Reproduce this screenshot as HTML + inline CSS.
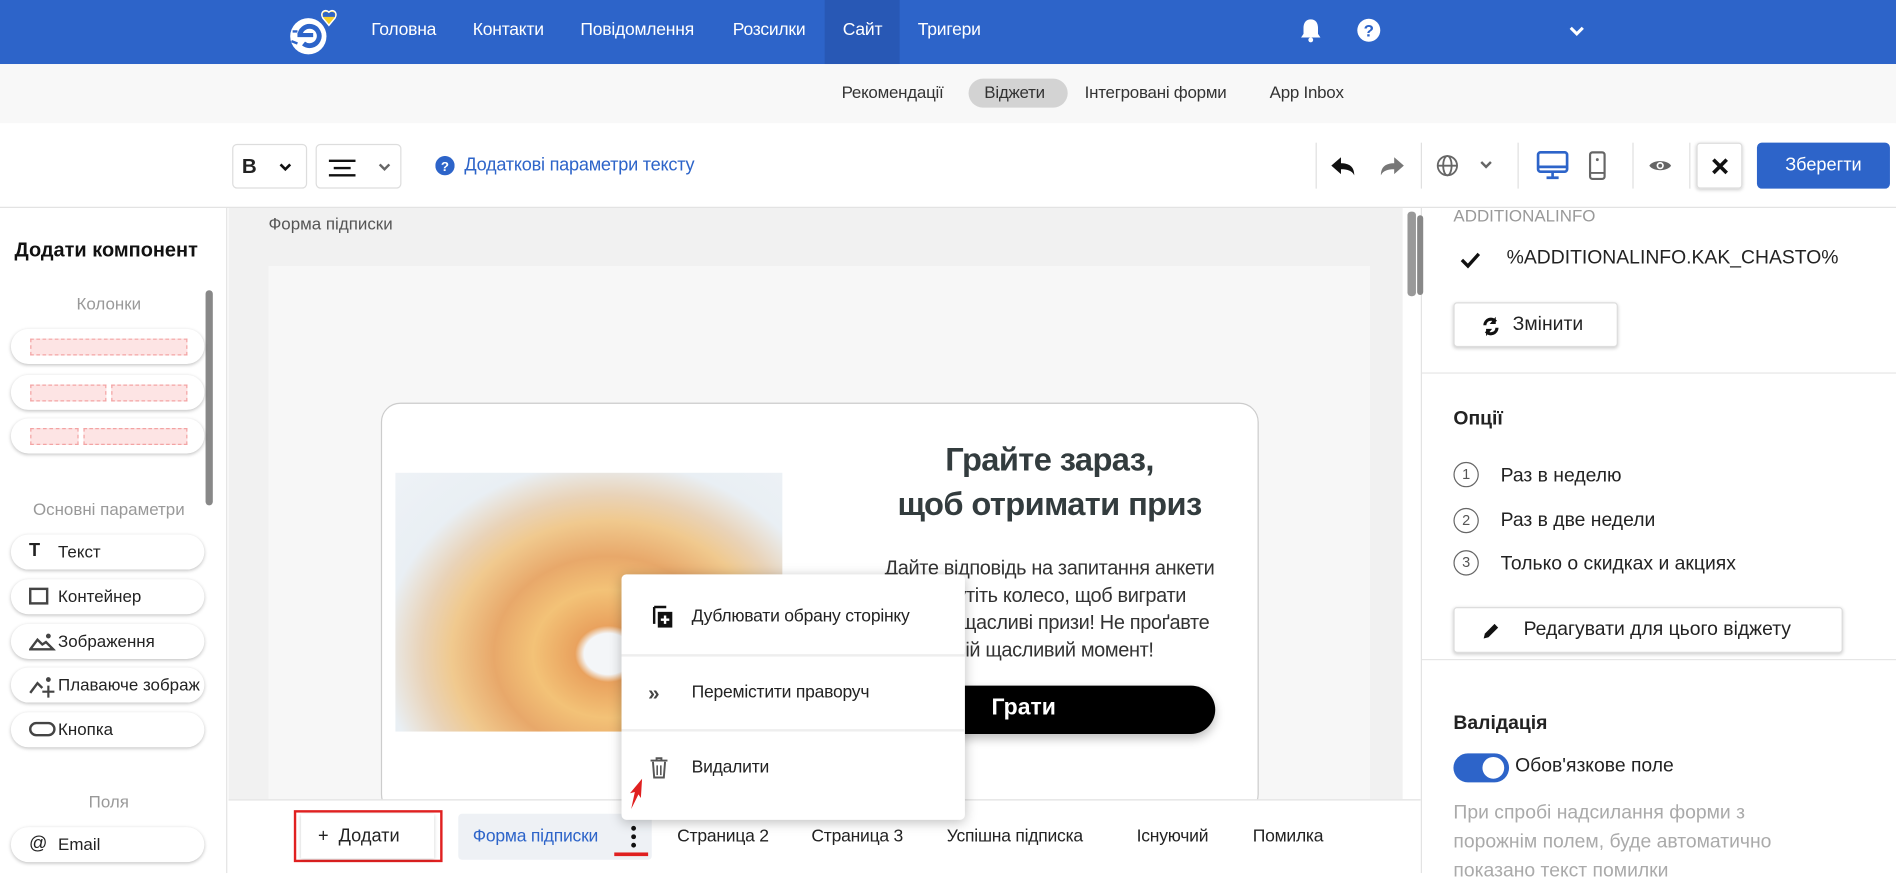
<!DOCTYPE html>
<html><head><meta charset="utf-8">
<style>
*{box-sizing:border-box;margin:0;padding:0}
html,body{width:1896px;height:873px;overflow:hidden;background:#fff}
#w{position:absolute;left:0;top:0;width:1568px;height:722px;transform:scale(1.20918);transform-origin:0 0;font-family:"Liberation Sans","Noto Sans CJK SC",sans-serif;color:#222}
.a{position:absolute}
.nav{left:0;top:0;width:1568px;height:53px;background:#2d64c9}
.nav span{position:absolute;top:17px;color:#fff;font-size:14.5px;letter-spacing:-.2px}
.sub{left:0;top:53px;width:1568px;height:49px;background:#f8f8f8}
.sub span{position:absolute;top:15px;font-size:14px;color:#333;letter-spacing:-.2px}
.tb{left:0;top:102px;width:1568px;height:70px;background:#fff;border-bottom:1px solid #e2e2e2}
.box{position:absolute;border:1px solid #ddd;border-radius:4px;background:#fff}
.sep{position:absolute;top:118px;width:1px;height:38px;background:#e0e0e0}
.left{left:0;top:172px;width:188px;height:550px;background:#fff;border-right:1px solid #e3e3e3}
.pill{position:absolute;left:9px;width:160px;height:29px;border-radius:15px;background:#fff;box-shadow:0 1px 3px rgba(0,0,0,.25);font-size:14px;color:#222}
.pill b{position:absolute;left:39px;top:6px;font-weight:normal}
.pill i{position:absolute;left:15px;top:7px;font-style:normal}
.sec{position:absolute;left:0;width:180px;text-align:center;font-size:14px;color:#999}
.dash{position:absolute;top:8px;height:14px;border:1px dashed #f3a3a3;background:#fde4e4}
.tabs span{position:absolute;top:684px;font-size:14.5px;color:#222;letter-spacing:-.2px}
.mi{position:absolute;left:572px;font-size:14.5px;color:#222;letter-spacing:-.2px}
.rp{left:1175px;top:172px;width:393px;height:550px;background:#fff;border-left:1px solid #e3e3e3}
.rp .t{position:absolute;font-size:16px;color:#222}
.btn{position:absolute;background:#fff;border:1px solid #ddd;border-radius:3px;box-shadow:0 1px 3px rgba(0,0,0,.2);font-size:16px}
.num{position:absolute;left:26px;width:21px;height:21px;border:1px solid #666;border-radius:50%;font-size:12px;text-align:center;line-height:19px;color:#555}
</style></head><body><div id="w">

<div class="a nav">
 <svg class="a" style="left:236px;top:6px" width="56" height="42" viewBox="0 0 56 42">
  <circle cx="19" cy="24" r="15" fill="#fff"/>
  <path d="M12 24 a8 8 0 1 1 3 6" stroke="#2d64c9" stroke-width="4" fill="none"/>
  <path d="M10 23 h13" stroke="#2d64c9" stroke-width="3.5"/>
  <path d="M5 28 l5 2 M6 20 l4 0" stroke="#2d64c9" stroke-width="2"/>
  <path d="M36 4 c-3-3 -8 0 -5 5 l5 6 l5-6 c3-5 -2-8 -5-5z" fill="#f6d02a" stroke="#fff" stroke-width="1.2"/>
  <path d="M31 5 c2-2 4-1 5 0 c1-1 3-2 5 0 v3 h-10z" fill="#2d64c9"/>
 </svg>
 <span style="left:307px">Головна</span>
 <span style="left:391px">Контакти</span>
 <span style="left:480px">Повідомлення</span>
 <span style="left:606px">Розсилки</span>
 <div class="a" style="left:682px;top:0;width:62px;height:53px;background:#2858b5"></div>
 <span style="left:697px">Сайт</span>
 <span style="left:759px">Тригери</span>
 <svg class="a" style="left:1074px;top:14px" width="20" height="22" viewBox="0 0 20 22"><path d="M10 2c-4 0-6 3-6 7v5l-2 3h16l-2-3V9c0-4-2-7-6-7z" fill="#fff"/><circle cx="10" cy="19" r="2" fill="#fff"/></svg>
 <svg class="a" style="left:1122px;top:15px" width="20" height="20" viewBox="0 0 20 20"><circle cx="10" cy="10" r="9.5" fill="#fff"/><text x="10" y="15" text-anchor="middle" font-size="14" font-weight="bold" fill="#2d64c9" font-family="Liberation Sans">?</text></svg>
 <svg class="a" style="left:1297px;top:21px" width="14" height="10" viewBox="0 0 14 10"><path d="M2 2l5 5 5-5" stroke="#fff" stroke-width="2.5" fill="none"/></svg>
</div>

<div class="a sub">
 <span style="left:696px">Рекомендації</span>
 <div class="a" style="left:801px;top:12px;width:82px;height:24px;border-radius:12px;background:#d3d3d3"></div>
 <span style="left:814px">Віджети</span>
 <span style="left:897px">Інтегровані форми</span>
 <span style="left:1050px">App Inbox</span>
</div>

<div class="a tb"></div>
<div class="box" style="left:192px;top:119px;width:62px;height:37px"><b style="position:absolute;left:7px;top:8px;font-size:17px">B</b><svg class="a" style="left:38px;top:15px" width="10" height="8"><path d="M1 1l4 4 4-4" stroke="#111" stroke-width="2.2" fill="none"/></svg></div>
<div class="box" style="left:261px;top:119px;width:71px;height:37px"><svg class="a" style="left:8px;top:10px" width="26" height="18"><path d="M2 3h22M6 9h14M2 15h22" stroke="#111" stroke-width="2"/></svg><svg class="a" style="left:51px;top:15px" width="10" height="8"><path d="M1 1l4 4 4-4" stroke="#666" stroke-width="2" fill="none"/></svg></div>
<svg class="a" style="left:360px;top:129px" width="16" height="16"><circle cx="8" cy="8" r="8" fill="#2d64c9"/><text x="8" y="12.5" text-anchor="middle" font-size="11" font-weight="bold" fill="#fff" font-family="Liberation Sans">?</text></svg>
<div class="a" style="left:384px;top:128px;font-size:15px;color:#2d64c9;letter-spacing:-.2px">Додаткові параметри тексту</div>
<div class="sep" style="left:1088px"></div><div class="sep" style="left:1175px"></div><div class="sep" style="left:1255px"></div><div class="sep" style="left:1350px"></div><div class="sep" style="left:1397px"></div>
<svg class="a" style="left:1100px;top:128px" width="22" height="18"><path d="M9 2L1 9l8 7v-4c5 0 9 1 11 5c0-7-4-10-11-10z" fill="#111"/></svg>
<svg class="a" style="left:1140px;top:128px" width="22" height="18"><path d="M13 2l8 7-8 7v-4c-5 0-9 1-11 5c0-7 4-10 11-10z" fill="#777"/></svg>
<svg class="a" style="left:1187px;top:127px" width="20" height="20"><g stroke="#666" stroke-width="1.5" fill="none"><circle cx="10" cy="10" r="8"/><ellipse cx="10" cy="10" rx="3.5" ry="8"/><path d="M2 10h16"/></g></svg>
<svg class="a" style="left:1224px;top:133px" width="10" height="8"><path d="M1 1l4 4 4-4" stroke="#666" stroke-width="2" fill="none"/></svg>
<svg class="a" style="left:1270px;top:124px" width="28" height="26"><rect x="2" y="2" width="24" height="16" rx="2" stroke="#2d64c9" stroke-width="2.2" fill="none"/><path d="M2 14h24M14 18v4M9 23h10" stroke="#2d64c9" stroke-width="2.2"/></svg>
<svg class="a" style="left:1313px;top:124px" width="16" height="26"><rect x="2" y="2" width="12" height="22" rx="2" stroke="#666" stroke-width="1.8" fill="none"/><circle cx="8" cy="8" r="1.2" fill="#666"/><path d="M2 19h12" stroke="#666" stroke-width="1.5"/></svg>
<svg class="a" style="left:1363px;top:130px" width="20" height="14"><path d="M1 7c3-5 15-5 18 0c-3 5-15 5-18 0z" fill="#666"/><circle cx="10" cy="7" r="3" fill="#fff"/><circle cx="10" cy="7" r="1.6" fill="#666"/></svg>
<div class="a" style="left:1403px;top:118px;width:38px;height:38px;border:1px solid #ddd;border-radius:3px;box-shadow:0 1px 3px rgba(0,0,0,.2)"><svg class="a" style="left:11px;top:11px" width="15" height="15"><path d="M2 2l11 11M13 2L2 13" stroke="#111" stroke-width="3"/></svg></div>
<div class="a" style="left:1453px;top:118px;width:110px;height:38px;background:#2d64c9;border-radius:4px;color:#fff;font-size:15px;text-align:center;line-height:38px">Зберегти</div>

<div class="a left">
 <div class="a" style="left:12px;top:26px;font-size:16.5px;font-weight:bold;color:#111">Додати компонент</div>
 <div class="a" style="left:170px;top:68px;width:6px;height:178px;border-radius:3px;background:#888"></div>
 <div class="sec" style="top:71px">Колонки</div>
 <div class="pill" style="top:100px"><div class="dash" style="left:16px;width:130px"></div></div>
 <div class="pill" style="top:138px"><div class="dash" style="left:16px;width:63px"></div><div class="dash" style="left:83px;width:63px"></div></div>
 <div class="pill" style="top:174px"><div class="dash" style="left:16px;width:40px"></div><div class="dash" style="left:60px;width:86px"></div></div>
 <div class="sec" style="top:241px">Основні параметри</div>
 <div class="pill" style="top:270px"><i style="font-weight:bold;font-size:15px;top:5px">T</i><b>Текст</b></div>
 <div class="pill" style="top:307px"><i><span style="display:block;width:16px;height:14px;border:2px solid #444"></span></i><b>Контейнер</b></div>
 <div class="pill" style="top:344px"><i><svg width="22" height="16"><path d="M1 14l6-8 4 4 3-2 6 6z" stroke="#444" stroke-width="2" fill="none"/><circle cx="16" cy="3" r="2" fill="#444"/></svg></i><b>Зображення</b></div>
 <div class="pill" style="top:380px;overflow:hidden"><i><svg width="22" height="18"><path d="M1 14l6-8 4 4" stroke="#444" stroke-width="2" fill="none"/><circle cx="16" cy="3" r="2" fill="#444"/><path d="M16 8v10M11 13h10" stroke="#444" stroke-width="1.8"/></svg></i><b style="white-space:nowrap">Плаваюче зображ</b></div>
 <div class="pill" style="top:417px"><i><span style="display:block;width:22px;height:12px;border:2px solid #444;border-radius:6px;margin-top:1px"></span></i><b>Кнопка</b></div>
 <div class="sec" style="top:483px">Поля</div>
 <div class="pill" style="top:512px"><i style="top:5px;font-size:15px">@</i><b>Email</b></div>
</div>

<div class="a" style="left:189px;top:172px;width:971px;height:489px;background:#f1f1f1"></div>
<div class="a" style="left:222px;top:177px;font-size:14px;color:#555">Форма підписки</div>
<div class="a" style="left:222px;top:220px;width:911px;height:441px;background:#f7f7f7"></div>
<div class="a" style="left:1164px;top:175px;width:7px;height:70px;border-radius:3px;background:#999"></div>
<div class="a" style="left:315px;top:333px;width:726px;height:340px;background:#fff;border:1px solid #ccc;border-radius:16px"></div>
<div class="a" style="left:327px;top:391px;width:320px;height:214px;overflow:hidden;background:radial-gradient(ellipse at 55% 70%,#f4f6f8 0 8%,#e9a25e 11%,#f3c277 25%,#e8a86a 38%,#f0c98e 52%,#e9d3b8 62%,#e9eff4 75%,#eef2f6 100%)"></div>
<div class="a" style="left:660px;top:362px;width:416px;text-align:center;font-size:27px;font-weight:bold;color:#333c3e;line-height:37px;letter-spacing:-.5px">Грайте зараз,<br>щоб отримати приз</div>
<div class="a" style="left:670px;top:459px;width:396px;text-align:center;font-size:16.5px;color:#333;line-height:22.5px;letter-spacing:-.3px">Дайте відповідь на запитання анкети<br>та крутіть колесо, щоб виграти<br>цінні та щасливі призи! Не проґавте<br>свій щасливий момент!</div>
<div class="a" style="left:710px;top:567px;width:295px;height:40px;background:#000;border-radius:20px;box-shadow:0 4px 8px rgba(0,0,0,.25);color:#fff;font-size:19px;font-weight:bold;padding:8px 0 0 110px">Грати</div>

<div class="a" style="left:189px;top:661px;width:986px;height:61px;background:#fff;border-top:1px solid #e0e0e0"></div>
<div class="a" style="left:243px;top:670px;width:123px;height:43px;border:2px solid #e02020"></div>
<div class="a" style="left:249px;top:673px;width:110px;height:37px;background:#fff;box-shadow:0 1px 3px rgba(0,0,0,.2);font-size:15px;padding:10px 0 0 14px">+&nbsp; Додати</div>
<div class="a" style="left:379px;top:673px;width:160px;height:38px;background:#eef1f5;border-radius:3px"></div>
<div class="tabs">
 <span style="left:391px;color:#2d64c9">Форма підписки</span>
 <span style="left:560px">Страница 2</span>
 <span style="left:671px">Страница 3</span>
 <span style="left:783px">Успішна підписка</span>
 <span style="left:940px">Існуючий</span>
 <span style="left:1036px">Помилка</span>
</div>
<div class="a" style="left:522px;top:683px;width:4px;height:4px;border-radius:2px;background:#111;box-shadow:0 7px 0 #111,0 14px 0 #111"></div>
<div class="a" style="left:508px;top:705px;width:28px;height:3px;background:#e02020"></div>

<div class="a" style="left:514px;top:475px;width:284px;height:203px;background:#fff;border-radius:4px;box-shadow:0 2px 10px rgba(0,0,0,.25)"></div>
<div class="a" style="left:514px;top:541px;width:284px;height:2px;background:#eee"></div>
<div class="a" style="left:514px;top:603px;width:284px;height:2px;background:#eee"></div>
<svg class="a" style="left:539px;top:500px" width="18" height="20"><path d="M2 2v14" stroke="#111" stroke-width="2"/><path d="M2 2h10" stroke="#111" stroke-width="2"/><rect x="5" y="6" width="12" height="13" fill="#111"/><path d="M11 9v7M7.5 12.5h7" stroke="#fff" stroke-width="2"/></svg>
<div class="mi" style="top:502px">Дублювати обрану сторінку</div>
<div class="a" style="left:536px;top:564px;font-size:17px;color:#444;font-weight:bold">»</div>
<div class="mi" style="top:565px">Перемістити праворуч</div>
<svg class="a" style="left:537px;top:625px" width="16" height="20"><path d="M1 4h14M6 4V2h4v2" stroke="#555" stroke-width="1.6" fill="none"/><path d="M3 5l1 13h8l1-13" stroke="#555" stroke-width="1.6" fill="none"/><path d="M6.5 8v8M9.5 8v8" stroke="#555" stroke-width="1.3"/></svg>
<div class="mi" style="top:627px">Видалити</div>
<svg class="a" style="left:516px;top:642px" width="22" height="28"><path d="M6 27l3-14-4 1 10-12-1 16-2-3z" fill="#e02020"/></svg>

<div class="a rp">
 <div class="a" style="left:-4px;top:6px;width:5px;height:66px;border-radius:3px;background:#888"></div>
 <div class="t" style="left:26px;top:-2px;font-size:14px;color:#999">ADDITIONALINFO</div>
 <svg class="a" style="left:31px;top:36px" width="18" height="14"><path d="M2 7l5 5 9-10" stroke="#111" stroke-width="2.8" fill="none"/></svg>
 <div class="t" style="left:70px;top:33px">%ADDITIONALINFO.KAK_CHASTO%</div>
 <div class="btn" style="left:26px;top:78px;width:136px;height:37px;padding:9px 0 0 48px">Змінити<svg class="a" style="left:22px;top:11px" width="16" height="16"><path d="M3 7a5 5 0 0 1 9-3M13 9a5 5 0 0 1-9 3" stroke="#111" stroke-width="2.6" fill="none"/><path d="M12 0v6h-5zM4 16v-6h5z" fill="#111"/></svg></div>
 <div class="a" style="left:0;top:136px;width:393px;height:1px;background:#e6e6e6"></div>
 <div class="t" style="left:26px;top:166px;font-weight:bold">Опції</div>
 <div class="num" style="top:210px">1</div><div class="t" style="left:65px;top:213px">Раз в неделю</div>
 <div class="num" style="top:248px">2</div><div class="t" style="left:65px;top:250px">Раз в две недели</div>
 <div class="num" style="top:283px">3</div><div class="t" style="left:65px;top:286px">Только о скидках и акциях</div>
 <div class="btn" style="left:26px;top:330px;width:322px;height:38px;padding:9px 0 0 57px">Редагувати для цього віджету<svg class="a" style="left:22px;top:11px" width="16" height="16"><path d="M2 14l1-4 8-8 3 3-8 8z" fill="#111"/></svg></div>
 <div class="a" style="left:0;top:373px;width:393px;height:1px;background:#e6e6e6"></div>
 <div class="t" style="left:26px;top:418px;font-weight:bold">Валідація</div>
 <div class="a" style="left:26px;top:451px;width:46px;height:24px;border-radius:12px;background:#2d64c9"><div class="a" style="left:24px;top:3px;width:18px;height:18px;border-radius:9px;background:#fff"></div></div>
 <div class="t" style="left:77px;top:453px">Обов'язкове поле</div>
 <div class="t" style="left:26px;top:489px;color:#aaa;line-height:24px">При спробі надсилання форми з<br>порожнім полем, буде автоматично<br>показано текст помилки</div>
</div>

</div></body></html>
